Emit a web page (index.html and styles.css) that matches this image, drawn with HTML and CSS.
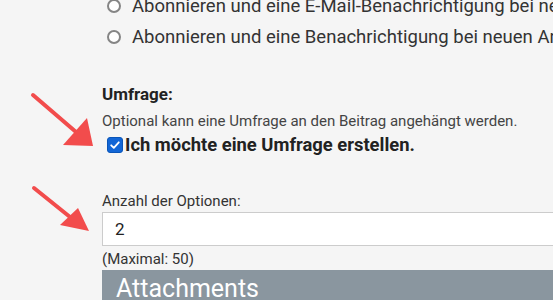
FILE: index.html
```html
<!DOCTYPE html>
<html>

<head>
    <meta http-equiv="content-type" content="text/html; charset=utf-8" />
    <title>Umfrage</title>
    <link rel="stylesheet" href="styles.css">
</head>

<body>
    <div class="page">
        <!-- Abo-Optionen -->
        <div class="subscribe">
            <label class="radio-row"><span class="radio"></span>Abonnieren und eine E-Mail-Benachrichtigung bei neuen Antworten erhalten</label>
            <label class="radio-row"><span class="radio"></span>Abonnieren und eine Benachrichtigung bei neuen Antworten erhalten</label>
        </div>

        <!-- Umfrage -->
        <div class="poll">
            <div class="poll-title">Umfrage:</div>
            <div class="hint">Optional kann eine Umfrage an den Beitrag angehängt werden.</div>
            <label class="check-row">
                <span class="checkbox">
                    <svg width="12" height="12" viewBox="0 0 12 12"><path d="M2.2 6.3 L4.8 8.8 L9.8 3.3" fill="none" stroke="#fff" stroke-width="1.8" stroke-linecap="round" stroke-linejoin="round"/></svg>
                </span>
                Ich möchte eine Umfrage erstellen.
            </label>

            <div class="field">
                <div class="field-label">Anzahl der Optionen:</div>
                <div class="input">2</div>
                <div class="hint max">(Maximal: 50)</div>
            </div>

            <div class="attachments">Attachments</div>
        </div>
    </div>

    <!-- Pfeile -->
    <svg class="arrow arrow-one" width="100" height="70" viewBox="0 85 100 70">
        <line x1="33" y1="95" x2="76" y2="132" stroke="#f24c4c" stroke-width="4" stroke-linecap="round"/>
        <polygon points="63,145 87,118 93,146" fill="#f24c4c"/>
    </svg>
    <svg class="arrow arrow-two" width="100" height="60" viewBox="0 180 100 60">
        <line x1="34" y1="188" x2="70" y2="217" stroke="#f24c4c" stroke-width="4" stroke-linecap="round"/>
        <polygon points="60,225 78,208 89,231" fill="#f24c4c"/>
    </svg>
</body>

</html>
```

FILE: styles.css
```css
body {
    margin: 0;
    background: #f5f5f5;
    font-family: Roboto, "Liberation Sans", sans-serif;
    color: #222;
    overflow: hidden;
}

.page {
    padding-left: 102px;
    margin-top: -10px;
}

.subscribe {
    display: flex;
    flex-direction: column;
}

.radio-row {
    display: flex;
    align-items: center;
    gap: 11px;
    height: 31px;
    font-size: 18.5px;
    color: #333;
    white-space: nowrap;
    padding-left: 5px;
}

.radio {
    width: 10px;
    height: 10px;
    border: 2px solid #858585;
    border-radius: 50%;
    background: #fff;
    flex: 0 0 auto;
}

.poll {
    margin-top: 32px;
}

.poll-title {
    font-size: 17px;
    font-weight: bold;
    line-height: 20px;
    color: #222;
}

.hint {
    font-size: 15px;
    line-height: 18px;
    color: #444;
    margin-top: 8px;
    white-space: nowrap;
}

.check-row {
    display: flex;
    align-items: center;
    gap: 2px;
    font-size: 18.4px;
    font-weight: bold;
    color: #222;
    padding-left: 5px;
    margin-top: 4px;
    line-height: 22px;
    white-space: nowrap;
}

.checkbox {
    width: 14px;
    height: 14px;
    border: 1px solid #0a55b8;
    border-radius: 3px;
    background: #1266d6;
    display: flex;
    align-items: center;
    justify-content: center;
}

.field {
    margin-top: 36px;
}

.field-label {
    font-size: 15px;
    line-height: 18px;
    color: #333;
}

.input {
    margin-top: 2px;
    height: 34px;
    width: 600px;
    box-sizing: border-box;
    border: 1px solid #ccc;
    background: #fff;
    font-size: 17px;
    line-height: 32px;
    padding-left: 12px;
    color: #222;
}

.hint.max {
    margin-top: 4px;
    color: #333;
}

.attachments {
    margin-top: 2px;
    width: 600px;
    height: 60px;
    background: #8a969f;
    color: #fff;
    font-size: 25px;
    line-height: 30px;
    padding: 4px 0 0 14px;
    box-sizing: border-box;
}

.arrow {
    position: absolute;
    left: 0;
}

.arrow-one {
    top: 85px;
}

.arrow-two {
    top: 180px;
}
```
